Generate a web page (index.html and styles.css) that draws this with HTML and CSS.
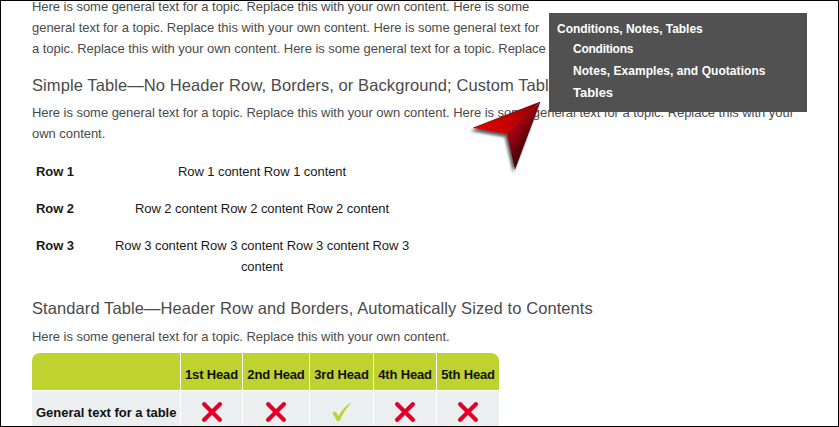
FILE: index.html
```
<!DOCTYPE html>
<html lang="en">
<head>
<meta charset="utf-8">
<title>Tables</title>
<link rel="stylesheet" href="styles.css">
</head>
<body>
<main class="frame">
  <article class="topic">
    <p class="intro">Here is some general text for a topic. Replace this with your own content. Here is some<br>general text for a topic. Replace this with your own content. Here is some general text for<br>a topic. Replace this with your own content. Here is some general text for a topic. Replace this</p>
    <h2 class="simple-title">Simple Table—No Header Row, Borders, or Background; Custom Table</h2>
    <p>Here is some general text for a topic. Replace this with your own content. Here is some general text for a topic. Replace this with your<br>own content.</p>
    <div class="simple">
      <b>Row 1</b><span>Row 1 content Row 1 content</span>
      <b>Row 2</b><span>Row 2 content Row 2 content Row 2 content</span>
      <b>Row 3</b><span>Row 3 content Row 3 content Row 3 content Row 3<br>content</span>
    </div>
    <h2 class="standard-title">Standard Table—Header Row and Borders, Automatically Sized to Contents</h2>
    <p>Here is some general text for a topic. Replace this with your own content.</p>
    <div class="standard">
      <div class="head"></div><div class="head">1st Head</div><div class="head">2nd Head</div><div class="head">3rd Head</div><div class="head">4th Head</div><div class="head">5th Head</div>
      <div class="cell label">General text for a table</div>
      <div class="cell"><svg class="icon" viewBox="0 0 20 20"><use href="#cross"/></svg></div>
      <div class="cell"><svg class="icon" viewBox="0 0 20 20"><use href="#cross"/></svg></div>
      <div class="cell"><svg class="icon" viewBox="0 0 20 20"><path class="check" d="M.3 11.2Q2 9.4 3.8 9.8 5.2 11.8 6.4 14.3 11.5 4.5 19.7.6 12 8.5 7.7 18.8L5 19Q3 14.7.3 11.2Z"/></svg></div>
      <div class="cell"><svg class="icon" viewBox="0 0 20 20"><use href="#cross"/></svg></div>
      <div class="cell"><svg class="icon" viewBox="0 0 20 20"><use href="#cross"/></svg></div>
    </div>
  </article>
  <nav class="menu">
    <a>Conditions, Notes, Tables</a>
    <a class="sub conditions">Conditions</a>
    <a class="sub notes">Notes, Examples, and Quotations</a>
    <a class="sub current">Tables</a>
  </nav>
  <svg class="arrow" viewBox="0 0 80 80">
    <defs>
      <linearGradient id="top" gradientUnits="userSpaceOnUse" x1="10" y1="30" x2="75" y2="12"><stop offset="0" stop-color="#e00000"/><stop offset=".5" stop-color="#c90000"/><stop offset="1" stop-color="#8c0000"/></linearGradient>
      <linearGradient id="side" gradientUnits="userSpaceOnUse" x1="46" y1="36" x2="60" y2="46"><stop offset="0" stop-color="#a00010"/><stop offset="1" stop-color="#4c0007"/></linearGradient>
    </defs>
    <path fill="url(#top)" d="M8 28 75 2 42 34Z"/>
    <path fill="url(#side)" d="M75 2 50 69 42 34Z"/>
    <path fill="none" stroke="#230000" stroke-opacity=".65" stroke-width=".8" d="M8 28 75 2 50 69"/>
  </svg>
</main>
<svg class="symbols"><symbol id="cross" viewBox="0 0 20 20"><path d="M2.2 2.2 17.8 17.8M17.8 2.2 2.2 17.8" stroke="#e00029" stroke-width="4.2" stroke-linecap="round"/></symbol></svg>
</body>
</html>
```
FILE: styles.css
```
* { box-sizing: border-box; }
body { margin: 0; overflow: hidden; background: #fff; color: #4a4a4a; font: 13px/21px "Liberation Sans", Arial, sans-serif; letter-spacing: -.06px; }
p, h2 { margin: 0; white-space: nowrap; }
p { letter-spacing: -.04px; }
.frame { position: relative; height: 427px; border: 1px solid #000; overflow: hidden; }
.topic { display: flow-root; margin-left: 31px; }
.intro { margin-top: -5px; }
h2 { font-size: 16.5px; font-weight: 400; letter-spacing: .09px; }
.simple-title { margin: 16px 0 6px; }
.simple { display: grid; grid-template-columns: 74px 304px; row-gap: 16px; margin-top: 17px; padding-left: 4px; color: #1a1a1a; }
.simple span { text-align: center; white-space: nowrap; }
.standard-title { margin: 21px 0 7px; }
.standard { display: grid; grid-template-columns: 148px 61px 66px 63px 62px 62px; grid-template-rows: 37px 44px; gap: 1px; width: 467px; margin-top: 6px; border-radius: 8px 8px 0 0; overflow: hidden; color: #111; font-weight: 700; }
.head { background: #bed230; text-align: center; padding-top: 11px; white-space: nowrap; letter-spacing: -.15px; }
.cell { background: #ebeff0; display: flex; justify-content: center; padding-top: 11px; white-space: nowrap; }
.label { justify-content: flex-start; padding-left: 4px; letter-spacing: -.02px; }
.icon { width: 20px; height: 20px; }
.check { fill: #bed230; }
.menu { position: absolute; left: 548px; top: 12px; width: 258px; height: 99px; padding: 6px 8px; background: #515151; color: #fff; white-space: nowrap; font-size: 12px; font-weight: 700; letter-spacing: -.03px; }
.menu a { display: block; height: 20px; }
.menu .sub { padding-left: 16px; }
.menu .conditions { letter-spacing: -.25px; }
.menu .notes { margin-top: 2px; letter-spacing: .06px; }
.menu .current { margin-top: 1px; font-size: 13px; }
.arrow { position: absolute; left: 464px; top: 99px; width: 80px; height: 80px; filter: drop-shadow(-2px 3px 1.5px rgba(0,0,0,.65)); }
.symbols { display: none; }
```
